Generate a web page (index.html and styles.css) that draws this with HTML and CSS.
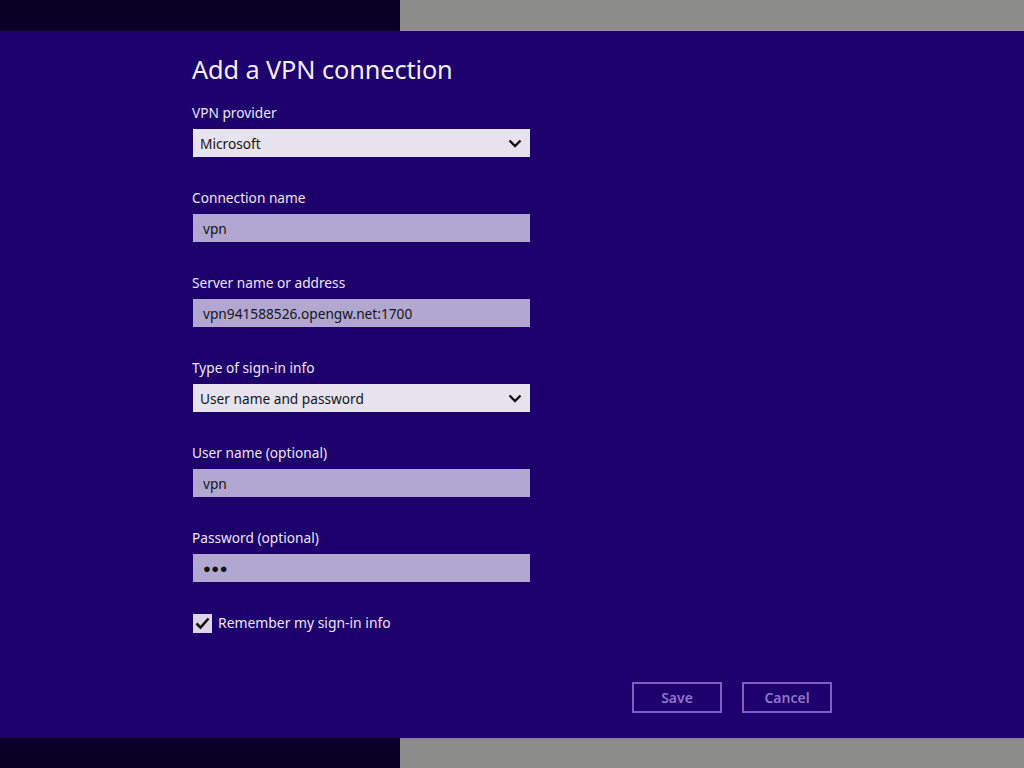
FILE: index.html
```html
<!DOCTYPE html>
<html>
<head>
<meta charset="utf-8">
<link rel="stylesheet" href="styles.css">
</head>
<body>
<div class="band">
  <div class="band-dark"></div>
  <div class="band-grey"></div>
</div>
<div class="main">
  <div class="form">
    <h1 class="title">Add a VPN connection</h1>
    <div class="field">
      <div class="label">VPN provider</div>
      <div class="box select"><span>Microsoft</span>
        <svg class="chev" width="14" height="9" viewBox="0 0 14 9"><path d="M1.5 1.5 L7 7 L12.5 1.5" fill="none" stroke="#111" stroke-width="2.4"/></svg>
      </div>
    </div>
    <div class="field">
      <div class="label">Connection name</div>
      <div class="box input"><span>vpn</span></div>
    </div>
    <div class="field">
      <div class="label">Server name or address</div>
      <div class="box input"><span>vpn941588526.opengw.net:1700</span></div>
    </div>
    <div class="field">
      <div class="label">Type of sign-in info</div>
      <div class="box select"><span>User name and password</span>
        <svg class="chev" width="14" height="9" viewBox="0 0 14 9"><path d="M1.5 1.5 L7 7 L12.5 1.5" fill="none" stroke="#111" stroke-width="2.4"/></svg>
      </div>
    </div>
    <div class="field">
      <div class="label">User name (optional)</div>
      <div class="box input"><span>vpn</span></div>
    </div>
    <div class="field">
      <div class="label">Password (optional)</div>
      <div class="box input"><span class="dots">●●●</span></div>
    </div>
    <div class="check-row">
      <div class="checkbox">
        <svg width="15" height="13" viewBox="0 0 15 13"><path d="M1.5 6.5 L5.5 10.5 L13.5 1.5" fill="none" stroke="#111" stroke-width="2.6"/></svg>
      </div>
      <span class="check-label">Remember my sign-in info</span>
    </div>
  </div>
  <div class="actions">
    <button class="btn">Save</button>
    <button class="btn">Cancel</button>
  </div>
</div>
<div class="band">
  <div class="band-dark bottom"></div>
  <div class="band-grey bottom"></div>
</div>
</body>
</html>
```
FILE: styles.css
```css
html, body {
  margin: 0;
  padding: 0;
}
body {
  width: 1024px;
  height: 768px;
  overflow: hidden;
  background: #1e006c;
  font-family: "Noto Sans", "Open Sans", sans-serif;
  display: flex;
  flex-direction: column;
}
.band {
  display: flex;
  height: 31px;
  flex: none;
}
.band-dark {
  width: 400px;
  background: #0a0026;
}
.band-grey {
  flex: 1;
  background: #8c8c8b;
  border-bottom: 1px solid #9a8cb4;
}
.band-dark.bottom, .band-grey.bottom {
  border: none;
}
.band-grey.bottom {
  border-top: 1px solid #8a80a0;
}
.main {
  height: 707px;
  flex: none;
  display: flex;
  flex-direction: column;
  background: #1e006d;
}
.form {
  padding-left: 192px;
  display: flex;
  flex-direction: column;
}
.title {
  margin: 20px 0 0 0;
  font-size: 25.3px;
  font-weight: 400;
  line-height: 36px;
  color: #f2eff8;
  letter-spacing: -0.1px;
}
.field {
  display: flex;
  flex-direction: column;
  width: 338px;
  margin-bottom: 31px;
}
.title + .field {
  margin-top: 16px;
}
.label {
  font-size: 13.7px;
  line-height: 20px;
  color: #ebe6f5;
  margin-bottom: 6px;
}
.box {
  height: 28px;
  box-sizing: border-box;
  margin-left: 1px;
  display: flex;
  align-items: center;
  padding-left: 7px;
  font-size: 13.7px;
  color: #161616;
}
.select {
  background: #e6e2ee;
  justify-content: space-between;
  padding-right: 8px;
}
.input {
  background: #b1a7d0;
  padding-left: 10px;
}
.chev {
  display: block;
}
.dots {
  font-size: 13px;
  letter-spacing: 0.5px;
  color: #101010;
}
.check-row {
  display: flex;
  align-items: center;
  margin-top: 0;
}
.checkbox {
  width: 19px;
  height: 19px;
  margin-left: 1px;
  background: #dcd6e8;
  display: flex;
  align-items: center;
  justify-content: center;
}
.check-label {
  margin-left: 6px;
  font-size: 13.9px;
  line-height: 20px;
  color: #ebe6f5;
}
.actions {
  margin-top: auto;
  margin-bottom: 25px;
  display: flex;
  gap: 20px;
  padding-left: 632px;
}
.btn {
  width: 90px;
  height: 31px;
  box-sizing: border-box;
  background: transparent;
  border: 2px solid #7f5fc6;
  color: #8d74cd;
  font-family: "Noto Sans", "Open Sans", sans-serif;
  font-size: 14px;
  font-weight: 600;
  padding: 0;
}
```
